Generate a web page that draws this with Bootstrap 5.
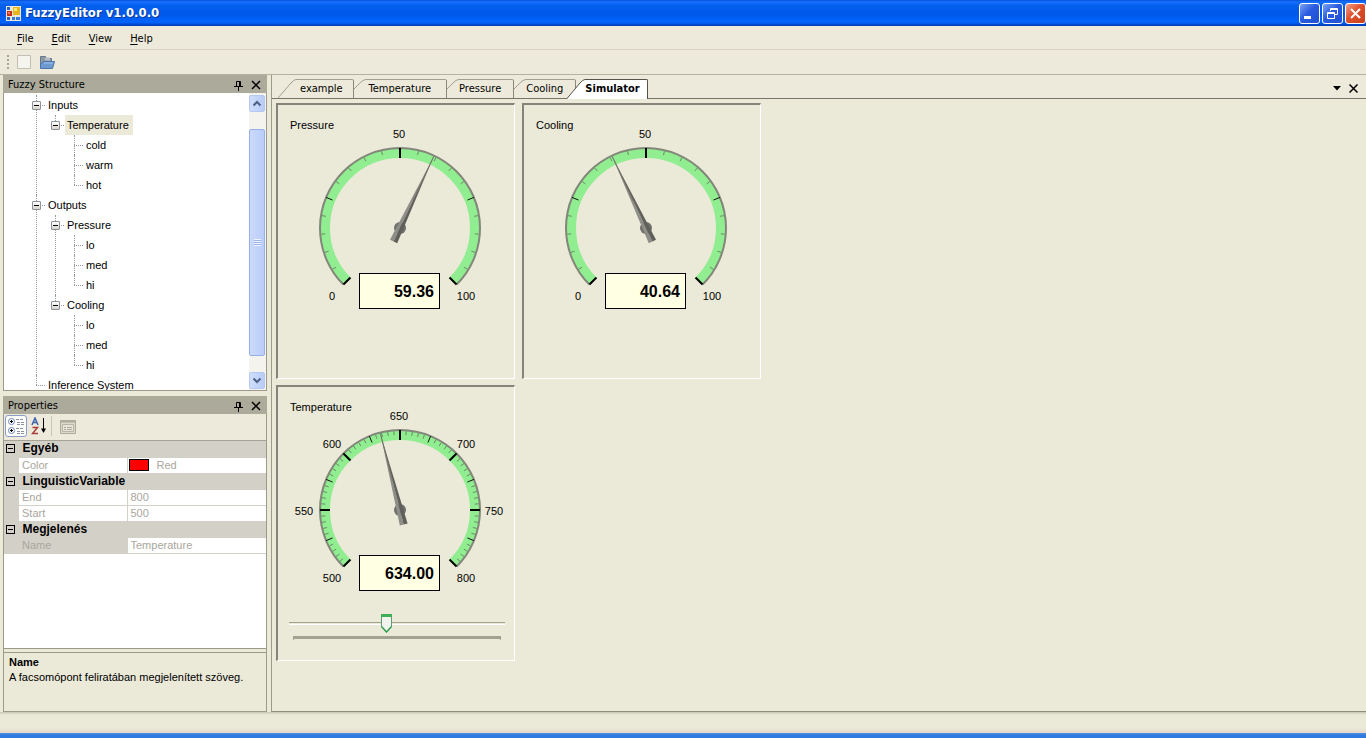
<!DOCTYPE html>
<html lang="en">
<head>
<meta charset="utf-8">
<meta name="viewport" content="width=device-width, initial-scale=1">
<title>FuzzyEditor v1.0.0.0</title>
<link href="https://cdn.jsdelivr.net/npm/bootstrap@5.3.0/dist/css/bootstrap.min.css" rel="stylesheet">
<style>
:root{--face:#ebe9d8;--strip:#edeadb;--edge:#9c9a8c;--caption:#acaa9b;--ui:"DejaVu Sans Condensed","DejaVu Sans",sans-serif;--sans:"Liberation Sans",Arial,sans-serif}
body{font-family:var(--ui);font-size:11px;line-height:16px;color:#000;background:var(--face)}
button{font:inherit;color:inherit;padding:0;border:0;background:none}
svg{display:block;flex:none}
.app{min-height:100vh}
.titlebar{height:26px;background:linear-gradient(#0a52d8 0,#1670ff 2px,#0560ee 5px,#0058e8 14px,#0064ff 22px,#0050d8 24px,#0038b0 26px);color:#fff;padding-left:6px}
.titlebar h1{font-size:13px;line-height:18px;font-weight:700;text-shadow:1px 1px 0 #0a3a9c;margin:0 0 0 4px}
.winbtn{width:21px;height:21px;border:1px solid #fff;border-radius:3px;background:linear-gradient(135deg,#7ba4f4,#2a5be0 45%,#2150d0)}
.winbtn.quit{background:linear-gradient(135deg,#f0a088,#e0502c 45%,#c8401c)}
.menubar{height:23px;padding:2px 0 0 8px;background:var(--strip)}
.menubar a{color:#000;text-decoration:none;padding:0 9px}
.menubar u{text-underline-offset:2px}
.tools{height:26px;border-top:1px solid #d6d2bf;border-bottom:1px solid #b5b2a2;background:var(--strip);padding-left:7px}
.grip{width:2px;height:14px;background:repeating-linear-gradient(#a8a595 0 2px,transparent 2px 4px)}
.workspace{padding-left:3px}
.side{width:264px}
.dock{border:1px solid var(--edge);border-top:0}
.tree-dock{height:316px}
.caption{height:18px;background:var(--caption);padding:2px 5px 0;margin-left:-1px;margin-right:-1px}
.caption h2{font-size:11px;line-height:16px;margin:0;font-weight:400}
.treeview{background:#fff;overflow:hidden;font-family:var(--sans)}
.treeview ul{list-style:none;margin:0;padding:0}
.treeview li{position:relative;padding-left:12px}
.treeview li::before{content:"";position:absolute;left:0;top:0;bottom:0;border-left:1px dotted #999}
.treeview li::after{content:"";position:absolute;left:0;top:10px;width:9px;border-top:1px dotted #999}
.treeview .root>li:last-child::before,.treeview li li:last-child::before{bottom:auto;height:10px}
.treeview .root{margin-left:32px;padding-top:2px}
.treeview ul ul{margin-left:7px}
.node{display:inline-block;height:20px;line-height:20px;vertical-align:top}
.node.chosen{background:var(--face);padding:0 4px 0 2px;margin-left:-2px}
.fold{position:absolute;z-index:1;left:-4px;top:6px;width:9px;height:9px;border:1px solid #8a929c;border-radius:1px;background:linear-gradient(#fff,#d8d4c8)}
.fold::after{content:"";position:absolute;left:1px;right:1px;top:3px;height:1px;background:#000}
.scroller{width:17px;background:#f4f3ee;padding:2px 1px 1px 0}
.scroller button{height:17px;border:1px solid #b4c8f0;border-radius:2px;background:linear-gradient(90deg,#d0defc,#b8ccf8)}
.thumb{margin-top:17px;flex:0 0 227px;border:1px solid #98b0e8;border-radius:2px;background:linear-gradient(90deg,#cbdafd,#bacdf9)}
.thumb i{width:7px;height:7px;background:repeating-linear-gradient(#eef3ff 0 1px,#9db5ec 1px 2px)}
.gap-row{height:5px}
.proptools{height:26px;padding:0 0 2px 1px;background:var(--strip)}
.proptools .on{width:22px;height:22px;border:1px solid #8a9ec8;border-radius:3px;background:#fcfcfa}
.vline{width:1px;height:20px;background:#c8c4b2}
.propbox{background:#fff;border-top:1px solid #a5a295;border-bottom:1px solid var(--edge)}
.props{width:100%;table-layout:fixed;border-collapse:collapse;font-family:var(--sans);color:#a9a69c}
.props th,.props td{height:16px;padding:0 0 0 3px;line-height:15px;font-weight:400;border-bottom:1px solid #d3d0c8}
.props th{border-right:1px solid #d3d0c8}
.props .gut,.props .cat th{background:#d3d0c8;border-color:#d3d0c8}
.props .cat th{color:#000;font-weight:700;font-family:var(--sans);font-size:12px}
.props .picked{background:#d3d0c8}
.fold2{display:block;width:9px;height:9px;border:1px solid #000;position:relative;margin-left:-1px}
.fold2::after{content:"";position:absolute;left:1px;right:1px;top:3px;height:1px;background:#000}
.swatch{width:20px;height:12px;border:1px solid #000;background:red;margin:0 8px 0 -2px}
.hint{min-height:59px;border-top:1px solid var(--edge);margin-top:3px;padding:2px 5px;font-family:var(--sans);line-height:15px}
.document{margin-left:4px;border-left:1px solid var(--edge);border-bottom:1px solid #8f8d80}
.tabstrip{height:24px;border-bottom:1px solid #77756a;padding:4px 0 0 6px;background:var(--strip)}
.tab{height:19px;position:relative}
.tab span{height:19px;line-height:18px;border-top:1px solid #a19f92;border-right:1px solid #8a887c;border-top-right-radius:2px;padding-right:12px}
.tab path{fill:none;stroke:#a19f92}
.tab.first span{padding-left:4px;padding-right:10px}
.tab.wide span{padding-left:3px;padding-right:15px}
.tab.now{margin-left:-9px;height:20px}
.tab.now span{height:20px;background:#fff;border-color:#55534a;padding-right:7px;font-weight:700}
.tab.now path{stroke:#55534a}
.tab.now .fillin{fill:#fff;stroke:none}
.panels{grid-template-columns:239px 239px;grid-auto-rows:276px;gap:6px 7px;padding:4px 0 0 4px;justify-content:start;align-content:start;margin-bottom:40px}
.gauge{border:1px solid #fff;border-top:2px solid #85837a;border-left:2px solid #85837a;font-family:var(--sans)}
.gauge text{font-size:11px;text-anchor:middle}
.gauge .name{text-anchor:start;font-size:11px}
.gauge .readout{font-size:16px;font-weight:700;text-anchor:end}
.slide{padding:0 9px 0 11px}
.slide input{display:block;width:100%;height:20px;margin:0;appearance:none;background:linear-gradient(#a3a192,#a3a192) 0 9px/100% 1px no-repeat,linear-gradient(#fff,#fff) 0 11px/100% 1px no-repeat}
.slide input::-webkit-slider-thumb{appearance:none;width:11px;height:20px;background:url("data:image/svg+xml,%3Csvg xmlns='http://www.w3.org/2000/svg' width='11' height='20'%3E%3Cpath d='M.5 1.5h10v12l-5 5.5-5-5.5z' fill='%23f1f4ee' stroke='%23629a70'/%3E%3Cpath d='M0 1h11v3H0z' fill='%233fae58'/%3E%3Cpath d='M.5 13.5l5 5.5 5-5.5' fill='none' stroke='%2333a050' stroke-width='1.5'/%3E%3C/svg%3E") no-repeat}
.ticks{height:4px;margin:3px 4px 0;border:1px solid #a3a192;border-top-width:3px;border-bottom:0}
.status{height:21px;background:linear-gradient(#c9c6b4 0,#ebe9d8 3px,#ebe9d8 16px,#e3d6ca 21px)}
.taskedge{height:5px;background:linear-gradient(#4c92e4 0,#2f7ade 2px)}
</style>
</head>
<body>
<div class="app d-flex flex-column">
  <header class="titlebar d-flex align-items-center">
    <svg width="15" height="15" viewBox="0 0 15 15"><path d="M0 0h15v15H0z" fill="#e9e6da"/><path d="M1 1h3v3H1zM1 11h3v3H1z" fill="#2860c8"/><path d="M1 5h5v5H1z" fill="#c8301c"/><path d="M2 6h2v2H2z" fill="#f08070"/><path d="M7 1h7v8H7z" fill="#e8b41c"/><path d="M8 2h3v3H8z" fill="#ffe678"/><path d="M6 11h3v3H6zM10 11h4v3h-4z" fill="#3878d8"/></svg>
    <h1>FuzzyEditor v1.0.0.0</h1>
    <div class="d-flex ms-auto" style="gap:2px">
      <button class="winbtn" aria-label="Minimize"><svg width="19" height="19"><path d="M4 12h7v3H4z" fill="#fff"/></svg></button>
      <button class="winbtn" aria-label="Restore"><svg width="19" height="19" fill="none" stroke="#fff"><path d="M7.500 7V4.500h7v6H12M7 5.500h8"/><path d="M4.500 8.500h7v6h-7zM4 9.500h8"/></svg></button>
      <button class="winbtn quit" aria-label="Close"><svg width="19" height="19"><path d="M5 5l9 9M14 5l-9 9" stroke="#fff" stroke-width="2"/></svg></button>
    </div>
  </header>
  <nav class="menubar d-flex align-items-center" aria-label="Main menu">
    <a href="#"><u>F</u>ile</a><a href="#"><u>E</u>dit</a><a href="#"><u>V</u>iew</a><a href="#"><u>H</u>elp</a>
  </nav>
  <div class="tools d-flex align-items-center">
    <span class="grip"></span>
    <button class="ms-2" aria-label="New"><svg width="14" height="15"><path d="M.5.500h13v13H.5z" fill="#f6f4ee" stroke="#c2bfb4"/></svg></button>
    <button class="ms-2" aria-label="Open"><svg width="17" height="15"><path d="M1.500 1.500h5l1 2h5v8h-11z" fill="#8c98a4" stroke="#66788c"/><path d="M6 2.500h5v3H6z" fill="#b5bec4"/><path d="M1.500 13.500V9l3-2.500h11l-2 7z" fill="#6f9ad0" stroke="#4c74a8"/><path d="M5 8h9" stroke="#a4c4ec"/></svg></button>
  </div>
  <main class="workspace d-flex flex-grow-1">
    <aside class="side d-flex flex-column">
      <section class="dock tree-dock d-flex flex-column">
        <div class="caption d-flex align-items-center"><h2 class="me-auto">Fuzzy Structure</h2>
          <button class="me-2" aria-label="Pin"><svg width="9" height="11"><path d="M2.500 6V1.500h4V6M5.500 1v5M0 6.500h9M4.500 7v4" fill="none" stroke="#000"/></svg></button>
          <button aria-label="Close pane"><svg width="11" height="10"><path d="M1 1l8 8M9 1L1 9" stroke="#000" stroke-width="1.500"/></svg></button></div>
        <div class="treeview d-flex flex-grow-1">
          <ul class="root flex-grow-1">
            <li><button class="fold" aria-label="Collapse Inputs"></button><span class="node">Inputs</span>
              <ul><li><button class="fold" aria-label="Collapse Temperature"></button><span class="node chosen">Temperature</span>
                <ul><li><span class="node">cold</span></li><li><span class="node">warm</span></li><li><span class="node">hot</span></li></ul></li></ul></li>
            <li><button class="fold" aria-label="Collapse Outputs"></button><span class="node">Outputs</span>
              <ul><li><button class="fold" aria-label="Collapse Pressure"></button><span class="node">Pressure</span>
                <ul><li><span class="node">lo</span></li><li><span class="node">med</span></li><li><span class="node">hi</span></li></ul></li>
              <li><button class="fold" aria-label="Collapse Cooling"></button><span class="node">Cooling</span>
                <ul><li><span class="node">lo</span></li><li><span class="node">med</span></li><li><span class="node">hi</span></li></ul></li></ul></li>
            <li><span class="node">Inference System</span></li>
          </ul>
          <div class="scroller d-flex flex-column">
            <button aria-label="Scroll up"><svg width="14" height="15"><path d="M3.500 9.500L7 6l3.500 3.500" fill="none" stroke="#4d6185" stroke-width="2"/></svg></button>
            <div class="thumb d-flex align-items-center justify-content-center"><i></i></div>
            <button class="mt-auto" aria-label="Scroll down"><svg width="14" height="15"><path d="M3.500 5.500L7 9l3.500-3.500" fill="none" stroke="#4d6185" stroke-width="2"/></svg></button>
          </div>
        </div>
      </section>
      <div class="gap-row"></div>
      <section class="dock d-flex flex-column flex-grow-1">
        <div class="caption d-flex align-items-center"><h2 class="me-auto">Properties</h2>
          <button class="me-2" aria-label="Pin"><svg width="9" height="11"><path d="M2.500 6V1.500h4V6M5.500 1v5M0 6.500h9M4.500 7v4" fill="none" stroke="#000"/></svg></button>
          <button aria-label="Close pane"><svg width="11" height="10"><path d="M1 1l8 8M9 1L1 9" stroke="#000" stroke-width="1.500"/></svg></button></div>
        <div class="proptools d-flex align-items-center">
          <button class="on" aria-label="Categorized"><svg width="20" height="20"><g fill="#fff" stroke="#6c88b8"><circle cx="5.500" cy="5.500" r="3"/><circle cx="5.500" cy="14.500" r="3"/></g><path d="M4 5.500h3M5.500 4v3M4 14.500h3M5.500 13v3" stroke="#000"/><path d="M10 3.500h3M14 3.500h3M11 6.500h3M15 6.500h3M11 8.500h3M15 8.500h3M10 12.500h3M14 12.500h3M11 15.500h3M15 15.500h3M11 17.500h3M15 17.500h3" stroke="#8b93a3"/></svg></button>
          <button class="ms-1" aria-label="Alphabetical"><svg width="16" height="18"><path d="M1 8l3-7 3 7M2 5.500h4" fill="none" stroke="#3c64ac" stroke-width="1.500"/><path d="M1.500 10.500h5l-5 6h5.500" fill="none" stroke="#a83c38" stroke-width="1.500"/><path d="M12.500 1v12" stroke="#000"/><path d="M10 11.500h5L12.500 16z"/></svg></button>
          <span class="vline ms-1"></span>
          <button class="ms-2" aria-label="Property pages" disabled><svg width="16" height="15"><path d="M.5 1.500h15v13H.5z" fill="#dcd9cc" stroke="#aeab9e"/><path d="M0 2.500h16" stroke="#aeab9e" stroke-width="2"/><path d="M2.500 5.500h11v7h-11z" fill="#e8e5d8" stroke="#b8b5a8"/><path d="M4 8.500h2M7 8.500h5M4 10.500h2M7 10.500h5" stroke="#aeab9e"/></svg></button>
        </div>
        <div class="propbox flex-grow-1">
          <table class="props">
            <colgroup><col style="width:15px"><col style="width:108px"><col></colgroup>
            <tbody>
              <tr class="cat"><th><span class="fold2"></span></th><th colspan="2">Egyéb</th></tr>
              <tr><td class="gut"></td><th scope="row">Color</th><td><div class="d-flex align-items-center"><span class="swatch"></span>Red</div></td></tr>
              <tr class="cat"><th><span class="fold2"></span></th><th colspan="2">LinguisticVariable</th></tr>
              <tr><td class="gut"></td><th scope="row">End</th><td>800</td></tr>
              <tr><td class="gut"></td><th scope="row">Start</th><td>500</td></tr>
              <tr class="cat"><th><span class="fold2"></span></th><th colspan="2">Megjelenés</th></tr>
              <tr><td class="gut"></td><th scope="row" class="picked">Name</th><td>Temperature</td></tr>
            </tbody>
          </table>
        </div>
        <div class="hint"><div class="fw-bold">Name</div><div>A facsomópont feliratában megjelenített szöveg.</div></div>
      </section>
    </aside>
    <section class="document flex-grow-1">
      <div class="tabstrip d-flex" role="tablist">
        <button class="tab first d-flex" role="tab"><svg width="18" height="19"><path d="M0 19L13 4q3-3.500 5-3.500"/></svg><span>example</span></button>
        <button class="tab wide d-flex" role="tab"><svg width="12" height="19"><path d="M0 10L6 4q3-3.500 6-3.500"/></svg><span>Temperature</span></button>
        <button class="tab d-flex" role="tab"><svg width="12" height="19"><path d="M0 10L6 4q3-3.500 6-3.500"/></svg><span>Pressure</span></button>
        <button class="tab d-flex" role="tab"><svg width="12" height="19"><path d="M0 10L6 4q3-3.500 6-3.500"/></svg><span>Cooling</span></button>
        <button class="tab now d-flex" role="tab" aria-selected="true"><svg width="18" height="20"><path class="fillin" d="M0 20L13 4q3-3.500 5-3.500V20z"/><path d="M0 19.500L13 4q3-3.500 5-3.500"/></svg><span>Simulator</span></button>
        <div class="d-flex align-items-center ms-auto pe-2">
          <button class="me-2" aria-label="Window list"><svg width="8" height="5"><path d="M0 0h8L4 4.500z"/></svg></button>
          <button aria-label="Close tab"><svg width="9" height="9"><path d="M.5.500l8 8M8.500.500l-8 8" stroke="#000" stroke-width="1.500"/></svg></button>
        </div>
      </div>
      <div class="panels d-grid">
        <div class="gauge" data-name="Pressure" data-min="0" data-max="100" data-step="50" data-value="59.36"></div>
        <div class="gauge" data-name="Cooling" data-min="0" data-max="100" data-step="50" data-value="40.64"></div>
        <div class="gauge" data-name="Temperature" data-min="500" data-max="800" data-step="50" data-value="634.00">
          <div class="slide"><input type="range" min="500" max="800" value="634" aria-label="Temperature"><div class="ticks"></div></div>
        </div>
      </div>
    </section>
  </main>
  <div class="status"></div>
  <div class="taskedge"></div>
</div>
<script src="https://cdn.jsdelivr.net/npm/bootstrap@5.3.0/dist/js/bootstrap.bundle.min.js"></script>
<script>
// Dial: 270 degree scale centred on CX, CY; 0 degrees points straight up.
const CX = 122, CY = 123, R = 80;
const at = (deg, r) => {
  const a = deg * Math.PI / 180;
  return [(CX + r * Math.sin(a)).toFixed(2), (CY - r * Math.cos(a)).toFixed(2)];
};
const arc = r => `M${at(-135, r)}A${r} ${r} 0 1 1 ${at(135, r)}`;
const tick = (deg, r1, r2, color, w) => `<path d="M${at(deg, r1)}L${at(deg, r2)}" stroke="${color}" stroke-width="${w}"/>`;
document.querySelectorAll('.gauge').forEach(el => {
  const {name, value} = el.dataset, min = +el.dataset.min, max = +el.dataset.max, step = +el.dataset.step;
  const angle = v => (v - min) / (max - min) * 270 - 135;
  const n = (max - min) / step * 10;
  let s = `<path d="${arc(75)}" fill="none" stroke="#90ee90" stroke-width="10"/><path d="${arc(R)}" fill="none" stroke="#82877a" stroke-width="2"/>`;
  for (let i = 0; i <= n; i++) {
    const v = min + i * step / 10, a = angle(v);
    if (i % 10 === 0) {
      const [x, y] = at(a, 95);
      s += tick(a, 70, 80, '#000', 2) + `<text x="${Math.round(x) - 1}" y="${Math.round(y) + 5}">${v}</text>`;
    } else if (i % 5 === 0) s += tick(a, 73, 80, '#111', 1);
    else s += tick(a, 75, 79, '#6c8a68', 1);
  }
  s += `<circle cx="${CX}" cy="${CY}" r="6" fill="#6e6e6c"/>
    <g transform="rotate(${angle(+value)} ${CX} ${CY})"><path d="M${CX} ${CY - 79}L${CX - 4} ${CY + 15}H${CX}z" fill="#8e8e88"/><path d="M${CX} ${CY - 79}L${CX + 4} ${CY + 15}H${CX}z" fill="#605f59"/><path d="M${CX} ${CY - 79}V${CY - 30}" stroke="#73736b"/></g>
    <rect x="81.500" y="168.500" width="80" height="35" fill="#ffffe3" stroke="#000"/>
    <text class="readout" x="156" y="192">${value}</text><text class="name" x="12" y="24">${name}</text>`;
  el.insertAdjacentHTML('afterbegin', `<svg width="236" height="226" role="img" aria-label="${name} ${value}">${s}</svg>`);
});
</script>
</body>
</html>
